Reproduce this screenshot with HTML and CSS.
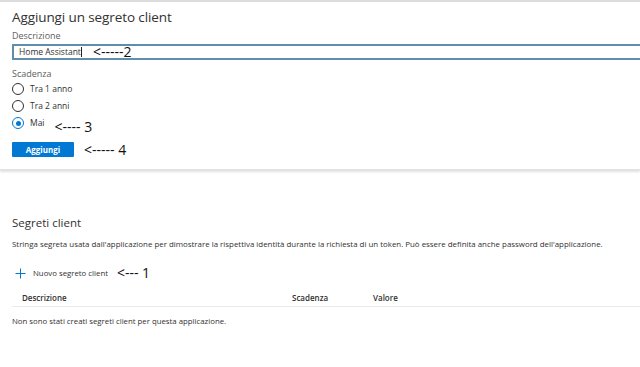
FILE: index.html
```html
<!DOCTYPE html>
<html lang="it">
<head>
<meta charset="utf-8">
<link rel="stylesheet" href="styles.css">
</head>
<body>
<section class="panel">
  <h1 class="panel-title">Aggiungi un segreto client</h1>
  <div class="field">
    <label class="label">Descrizione</label>
    <div class="input-row">
      <div class="input"><span class="input-text">Home Assistant</span><span class="caret"></span><span class="note note-2">&lt;-----2</span></div>
    </div>
  </div>
  <div class="field">
    <div class="label label-exp">Scadenza</div>
    <div class="radios">
      <div class="radio"><span class="circle"></span><span class="radio-text">Tra 1 anno</span></div>
      <div class="radio"><span class="circle"></span><span class="radio-text">Tra 2 anni</span></div>
      <div class="radio"><span class="circle checked"></span><span class="radio-text">Mai</span><span class="note note-3">&lt;---- 3</span></div>
    </div>
  </div>
  <div class="actions">
    <button class="btn">Aggiungi</button>
    <span class="note note-4">&lt;----- 4</span>
  </div>
</section>

<section class="secrets">
  <h2 class="secrets-title">Segreti client</h2>
  <p class="secrets-desc">Stringa segreta usata dall'applicazione per dimostrare la rispettiva identità durante la richiesta di un token. Può essere definita anche password dell'applicazione.</p>
  <div class="new-row">
    <span class="plus"><svg width="11" height="11" viewBox="0 0 11 11"><path d="M5.5 0.5v10M0.5 5.5h10" stroke="#0078d4" stroke-width="1" fill="none"/></svg></span>
    <span class="new-text">Nuovo segreto client</span>
    <span class="note note-1">&lt;--- 1</span>
  </div>
  <div class="table-head">
    <span class="col col-desc">Descrizione</span>
    <span class="col col-exp">Scadenza</span>
    <span class="col col-val">Valore</span>
  </div>
  <p class="empty">Non sono stati creati segreti client per questa applicazione.</p>
</section>
</body>
</html>
```
FILE: styles.css
```css
html, body {
  margin: 0;
  padding: 0;
  background: #fff;
}
body {
  font-family: "Open Sans", "Noto Sans", sans-serif;
  font-size: 9px;
  line-height: 12px;
  color: #323130;
  width: 640px;
  height: 367px;
  overflow: hidden;
}
.panel {
  border-top: 2px solid #dcdcdc;
  padding: 6px 0 12px 12px;
  box-shadow: 0 2px 2px rgba(0,0,0,0.12);
  border-bottom: 1px solid #e2e2e2;
}
.panel-title {
  margin: 0;
  font-size: 13.5px;
  font-weight: 400;
  line-height: 18px;
  letter-spacing: -0.1px;
  color: #323130;
}
.field {
  margin-top: 3px;
}
.label {
  display: block;
  font-size: 9px;
  line-height: 14px;
  color: #605e5c;
}
.label-exp {
  margin-top: 7px;
}
.input-row {
  margin-top: 1px;
}
.input {
  height: 12px;
  border: 2px solid #5e8eab;
  border-right: none;
  display: flex;
  align-items: center;
  padding-left: 5px;
}
.input-text {
  font-size: 8.5px;
  color: #323130;
}
.caret {
  width: 1px;
  height: 10px;
  background: #222;
}
.note {
  font-family: "Open Sans", "Noto Sans", sans-serif;
  font-size: 14px;
  color: #111;
  line-height: 14px;
}
.note-2 {
  margin-left: 11px;
}
.radios {
  display: flex;
  flex-direction: column;
  gap: 5px;
  margin-top: 2px;
}
.radio {
  display: flex;
  align-items: center;
  height: 12px;
}
.circle {
  width: 10px;
  height: 10px;
  border: 1px solid #323130;
  border-radius: 50%;
  display: flex;
  align-items: center;
  justify-content: center;
}
.circle.checked {
  border-color: #0078d4;
}
.circle.checked::after {
  content: "";
  width: 5px;
  height: 5px;
  border-radius: 50%;
  background: #0078d4;
}
.radio-text {
  font-size: 8.5px;
  margin-left: 6px;
  color: #323130;
}
.note-3 {
  margin-left: 10px;
  position: relative;
  top: 4px;
}
.actions {
  display: flex;
  align-items: center;
  margin-top: 13px;
}
.btn {
  width: 62px;
  height: 15px;
  background: #0078d4;
  color: #fff;
  border: none;
  border-radius: 1px;
  font-family: "Open Sans", "Noto Sans", sans-serif;
  font-size: 8px;
  font-weight: 700;
  padding: 0;
}
.note-4 {
  margin-left: 10px;
}
.secrets {
  padding: 45px 0 0 12px;
}
.secrets-title {
  margin: 0;
  font-size: 11.5px;
  font-weight: 400;
  line-height: 16px;
}
.secrets-desc {
  margin: 7px 0 0;
  font-size: 7.9px;
  line-height: 12px;
  color: #323130;
}
.new-row {
  display: flex;
  align-items: center;
  margin-top: 16px;
  padding-left: 3px;
  height: 14px;
}
.plus {
  display: flex;
  width: 11px;
  height: 11px;
}
.new-text {
  font-size: 7.8px;
  margin-left: 7px;
}
.note-1 {
  margin-left: 9px;
}
.table-head {
  display: flex;
  align-items: center;
  margin-top: 9px;
  height: 17px;
  border-bottom: 1px solid #edebe9;
  font-size: 8px;
  font-weight: 600;
}
.col-desc {
  padding-left: 10px;
  width: 270px;
}
.col-exp {
  width: 81px;
}
.empty {
  margin: 8px 0 0;
  font-size: 7.8px;
  line-height: 12px;
}
```
